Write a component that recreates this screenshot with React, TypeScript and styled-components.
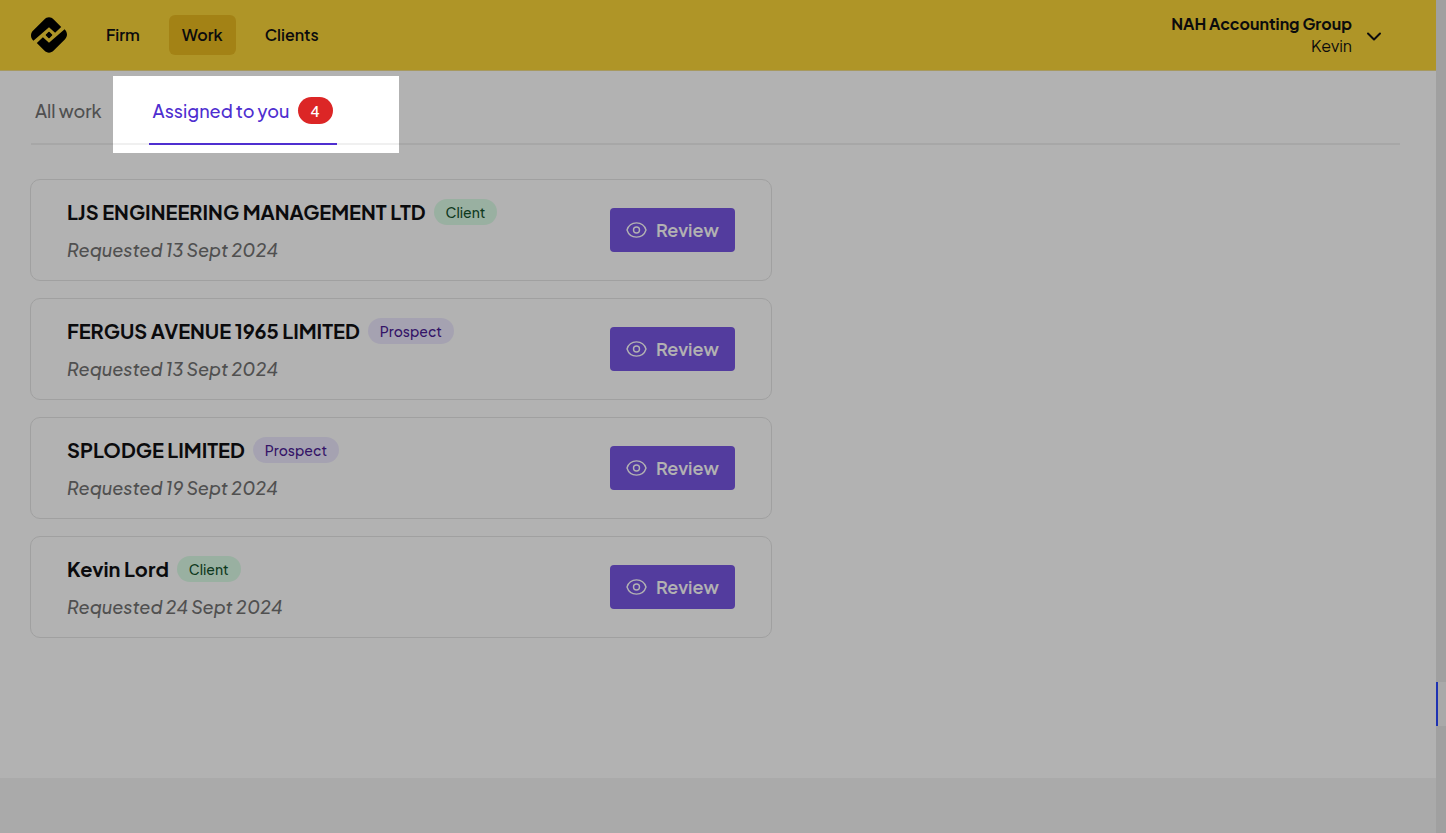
import React from "react";
import styled, { createGlobalStyle } from "styled-components";

const GlobalStyle = createGlobalStyle`
  *, *::before, *::after { box-sizing: border-box; }
  body {
    margin: 0;
    background: #fff;
    color: #111113;
    font-family: "Plus Jakarta Sans", Inter, "Liberation Sans", sans-serif;
    font-size: 16px;
    line-height: 22px;
  }
  button { font: inherit; cursor: pointer; }
`;

const Shell = styled.div`
  display: grid;
  grid-template-columns: minmax(0, 1fr) 10px;
  min-height: 100vh;
`;

const Page = styled.div`
  display: flex;
  flex-direction: column;
`;

const Header = styled.header`
  display: flex;
  align-items: center;
  justify-content: space-between;
  min-height: 71px;
  padding: 0 54px 0 31px;
  background: #fbd639;
  border-bottom: 1px solid #f0dc88;
`;

const Brand = styled.div`
  display: flex;
  align-items: center;
  gap: 26px;
`;

const LogoLink = styled.a`
  display: flex;
  color: #000;
`;

const Nav = styled.nav`
  display: flex;
  gap: 16px;
`;

const NavLink = styled.a<{ $active?: boolean }>`
  padding: 9px 13px;
  border-radius: 6px;
  background: ${(p) => (p.$active ? "#eaba1f" : "transparent")};
  color: inherit;
  font-weight: 600;
  text-decoration: none;
`;

const Account = styled.button`
  display: flex;
  align-items: center;
  gap: 14px;
  padding: 0;
  border: 0;
  background: none;
  color: inherit;
  text-align: right;
`;

const AccountText = styled.span`
  display: flex;
  flex-direction: column;
`;

const FirmName = styled.span`
  font-weight: 700;
`;

const Main = styled.main`
  flex: 1;
  padding: 0 36px 36px 30px;
`;

const Tabs = styled.div`
  display: flex;
  gap: 43px;
  margin-left: 1px;
  border-bottom: 2px solid #f0f0f0;
`;

const Tab = styled.button<{ $active?: boolean }>`
  position: relative;
  display: flex;
  align-items: center;
  gap: 8px;
  height: 74px;
  margin-bottom: -2px;
  padding: 7px 4px 0;
  border: 0;
  border-bottom: 2px solid ${(p) => (p.$active ? "#4f2fd0" : "transparent")};
  background: none;
  color: ${(p) => (p.$active ? "#4f2fd0" : "#737373")};
  font-size: 18px;
  font-weight: 500;
  white-space: nowrap;
`;

const Count = styled.span`
  padding: 3px 13px 2px;
  border-radius: 14px;
  background: #dc2626;
  color: #fff;
  font-size: 14px;
  font-weight: 600;
`;

const Spotlight = styled.span`
  position: absolute;
  z-index: 1;
  inset: 5px -62px -10px -36px;
  box-shadow: 0 0 0 9999px rgba(0, 0, 0, 0.3);
  pointer-events: none;
`;

const Requests = styled.ul`
  display: flex;
  flex-direction: column;
  gap: 17px;
  max-width: 742px;
  margin: 34px 0 0;
  padding: 0;
  list-style: none;
`;

const Card = styled.li`
  display: flex;
  align-items: center;
  justify-content: space-between;
  padding: 18px 36px;
  border: 1px solid #e5e5e5;
  border-radius: 10px;
`;

const Details = styled.div`
  display: flex;
  flex-direction: column;
  gap: 13px;
`;

const TitleRow = styled.div`
  display: flex;
  align-items: center;
  gap: 8px;
`;

const Title = styled.h2`
  margin: 0;
  font-size: 20px;
  font-weight: 700;
  line-height: 27px;
  white-space: nowrap;
`;

const Tag = styled.span<{ $kind: Kind }>`
  padding: 2px 12px;
  border-radius: 13px;
  background: ${(p) => (p.$kind === "Client" ? "#dcfce7" : "#ede9fe")};
  color: ${(p) => (p.$kind === "Client" ? "#14532d" : "#4c1d95")};
  font-size: 14px;
  font-weight: 500;
`;

const Requested = styled.p`
  margin: 0;
  color: #737373;
  font-size: 18px;
  font-style: italic;
  font-weight: 500;
  line-height: 24px;
`;

const ReviewButton = styled.button`
  display: flex;
  align-items: center;
  justify-content: center;
  gap: 9px;
  width: 125px;
  height: 44px;
  padding: 0;
  border: 0;
  border-radius: 4px;
  background: #7856e3;
  color: #fff;
  font-size: 18px;
  font-weight: 600;
`;

const Footer = styled.footer`
  height: 55px;
  background: #f4f4f4;
`;

const Rail = styled.div`
  display: flex;
  flex-direction: column;
  justify-content: flex-end;
  padding-bottom: 107px;
  background: #e5e5e5;
`;

const RailHandle = styled.div`
  height: 44px;
  border-left: 2px solid #2c48ff;
  background: #f3f3f3;
`;

const half =
  "M2.4 23.8C-.7 20.6-.8 16.4 2.2 13.500L13.300 2.400C16-.4 20-.4 22.700 2.400L30.200 10L24.100 15.800L18 10.200Z";

const Logo = () => (
  <svg width="36" height="36" viewBox="0 0 36 36" fill="currentColor" aria-hidden="true">
    <path d={half} />
    <path d={half} transform="rotate(180 18 18)" />
    <path d="M18 15.500L20.500 18L18 20.500L15.500 18Z" stroke="currentColor" strokeWidth="1.600" strokeLinejoin="round" />
  </svg>
);

const Chevron = () => (
  <svg width="16" height="16" viewBox="0 0 16 16" fill="none" stroke="currentColor" strokeWidth="2" strokeLinecap="round" strokeLinejoin="round" aria-hidden="true">
    <path d="M2 6.500l6 6 6-6" />
  </svg>
);

const Eye = () => (
  <svg width="21" height="16" viewBox="0 0 21 16" fill="none" stroke="currentColor" strokeWidth="1.4" aria-hidden="true">
    <path d="M1 8C2.4 3.6 6 .9 10.5.9S18.6 3.6 20 8C18.6 12.4 15 15.1 10.5 15.1S2.4 12.4 1 8Z" strokeLinejoin="round" />
    <circle cx="10.5" cy="8" r="3" />
  </svg>
);

type Kind = "Client" | "Prospect";

const requests: { name: string; kind: Kind; date: string }[] = [
  { name: "LJS ENGINEERING MANAGEMENT LTD", kind: "Client", date: "13 Sept 2024" },
  { name: "FERGUS AVENUE 1965 LIMITED", kind: "Prospect", date: "13 Sept 2024" },
  { name: "SPLODGE LIMITED", kind: "Prospect", date: "19 Sept 2024" },
  { name: "Kevin Lord", kind: "Client", date: "24 Sept 2024" },
];

export default function App() {
  return (
    <>
      <GlobalStyle />
      <Shell>
        <Page>
          <Header>
            <Brand>
              <LogoLink href="#home" aria-label="Home">
                <Logo />
              </LogoLink>
              <Nav>
                <NavLink href="#firm">Firm</NavLink>
                <NavLink href="#work" $active aria-current="page">Work</NavLink>
                <NavLink href="#clients">Clients</NavLink>
              </Nav>
            </Brand>
            <Account type="button">
              <AccountText>
                <FirmName>NAH Accounting Group</FirmName>
                <span>Kevin</span>
              </AccountText>
              <Chevron />
            </Account>
          </Header>
          <Main>
            <Tabs role="tablist">
              <Tab type="button" role="tab" aria-selected={false}>All work</Tab>
              <Tab type="button" role="tab" aria-selected $active>
                Assigned to you
                <Count>4</Count>
                <Spotlight />
              </Tab>
            </Tabs>
            <Requests>
              {requests.map((r) => (
                <Card key={r.name}>
                  <Details>
                    <TitleRow>
                      <Title>{r.name}</Title>
                      <Tag $kind={r.kind}>{r.kind}</Tag>
                    </TitleRow>
                    <Requested>Requested {r.date}</Requested>
                  </Details>
                  <ReviewButton type="button">
                    <Eye />
                    Review
                  </ReviewButton>
                </Card>
              ))}
            </Requests>
          </Main>
          <Footer />
        </Page>
        <Rail>
          <RailHandle />
        </Rail>
      </Shell>
    </>
  );
}
